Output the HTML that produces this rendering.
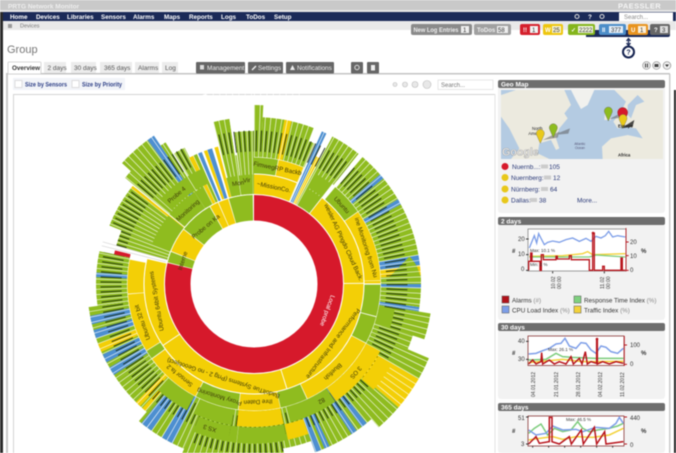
<!DOCTYPE html>
<html><head><meta charset="utf-8"><title>PRTG Network Monitor</title>
<style>
html,body{margin:0;padding:0;background:#fff;width:676px;height:453px;overflow:hidden}
svg{display:block;filter:blur(.4px);font-family:"Liberation Sans",sans-serif}
svg svg{filter:none}
.s circle{fill:none}
.g{stroke:#8fbc1f}.y{stroke:#f3cf06}.b{stroke:#4d8fd0}.r{stroke:#d6192b}.w{stroke:#fff}
.a130{r:110px;stroke-width:40px}.a142{r:116px;stroke-width:52px}.a143{r:116.5px;stroke-width:53px}
.a153{r:121.5px;stroke-width:63px}.a156{r:123px;stroke-width:66px}.a158{r:124px;stroke-width:68px}
.a167{r:128.5px;stroke-width:77px}.a179{r:134.5px;stroke-width:89px}.a190{r:140px;stroke-width:100px}
.a195{r:142.5px;stroke-width:105px}
.x1{r:76.25px;stroke-width:25.5px}.x2{r:99.75px;stroke-width:19.5px}.x3{r:118.5px;stroke-width:16px}
.x4{r:135px;stroke-width:16px}.x5{r:151.5px;stroke-width:16px}
.l text{font-size:6.2px;fill:#3d3a08;text-anchor:middle}
.t{font-size:6.5px;fill:#555}
.n{font-size:6.3px;fill:#fff;font-weight:bold}
.k{font-size:6.5px;fill:#2b3a78}
.h{font-size:6.5px;fill:#fff;font-weight:bold}
.v{font-size:6px;fill:#333}
</style></head><body>
<svg width="676" height="453" viewBox="0 0 676 453" xmlns="http://www.w3.org/2000/svg">
<rect width="676" height="453" fill="#fff"/>
<!-- chrome -->
<rect width="676" height="12" fill="#c9c9c9"/>
<rect y="10" width="676" height="2" fill="#e6e6e6"/>
<text x="8" y="8.5" font-size="6.5" font-weight="bold" fill="#eee">PRTG Network Monitor</text>
<text x="618" y="8.5" font-size="7.5" font-weight="bold" fill="#f5f5f5" letter-spacing=".4">PAESSLER</text>
<rect y="12" width="676" height="9" fill="#1b2a58"/>
<g class="n">
<text x="10" y="19">Home</text><text x="36" y="19">Devices</text><text x="67" y="19">Libraries</text><text x="101" y="19">Sensors</text><text x="133" y="19">Alarms</text><text x="164" y="19">Maps</text><text x="189" y="19">Reports</text><text x="221" y="19">Logs</text><text x="246" y="19">ToDos</text><text x="274" y="19">Setup</text>
</g>
<circle cx="577" cy="16.5" r="2" fill="none" stroke="#ddd" stroke-width="1"/>
<text x="588" y="19" class="n">?</text>
<circle cx="602" cy="16.5" r="2" fill="none" stroke="#ddd" stroke-width="1"/>
<rect x="619" y="12.5" width="54" height="8.5" fill="#fff"/>
<text x="624" y="19" font-size="6" fill="#888">Search...</text>
<rect y="21" width="676" height="9" fill="#e9e9e9"/>
<text x="20" y="27.5" font-size="5.5" fill="#777">Devices</text>
<rect x="8" y="24" width="4" height="4" fill="#999"/>
<!-- side stripes -->
<rect width="3" height="441" fill="#2a2a2a" y="12"/>
<rect x="6" y="74" width="2" height="379" fill="#c8c8c8"/>
<rect x="13" y="95" width="1" height="358" fill="#d4d4d4"/>
<rect x="674" y="90" width="2" height="363" fill="#222"/>
<rect x="669" y="74" width="1.5" height="379" fill="#ccc"/>
<text x="7" y="53" font-size="11" fill="#777">Group</text>
<!-- pills -->
<rect x="411" y="24" width="61" height="11" rx="2" fill="#8a8a8a"/><text x="413.500" y="32" font-size="6" font-weight="bold" fill="#eee" textLength="45" lengthAdjust="spacingAndGlyphs">New Log Entries</text><rect x="461" y="26" width="8" height="7" fill="#eee"/><text x="463" y="32" font-size="6" fill="#333">1</text>
<rect x="474" y="24" width="37" height="11" rx="2" fill="#a0a0a0"/><text x="477" y="32" font-size="6" font-weight="bold" fill="#eee">ToDos</text><rect x="497" y="26" width="11" height="7" fill="#eee"/><text x="498" y="32" font-size="6" fill="#333">58</text>
<path d="M586 30h84v5q0 2-2 2h-82z" fill="#1b2a58"/>
<rect x="520" y="24" width="20" height="11" rx="2" fill="#d5202c"/><text x="523" y="32" font-size="6" font-weight="bold" fill="#fff">!!</text><rect x="530" y="26" width="8" height="7" fill="#f2f2f2"/><text x="532" y="32" font-size="6" fill="#333">1</text>
<rect x="543" y="24" width="20" height="11" rx="2" fill="#eec60f"/><text x="545" y="32" font-size="6" font-weight="bold" fill="#fff">W</text><rect x="552" y="26" width="9" height="7" fill="#f7f2cc"/><text x="553" y="32" font-size="6" fill="#333">25</text>
<rect x="568" y="24" width="27" height="11" rx="2" fill="#84b51c"/><text x="571" y="32" font-size="6" font-weight="bold" fill="#fff">✓</text><rect x="578" y="26" width="15" height="7" fill="#f0f5dc"/><text x="579" y="32" font-size="6" fill="#333">2222</text>
<rect x="599" y="24" width="27" height="11" rx="2" fill="#4c8dc8"/><text x="602" y="32" font-size="6" font-weight="bold" fill="#fff">II</text><rect x="609" y="26" width="14" height="7" fill="#e4eef8"/><text x="611" y="32" font-size="6" fill="#333">377</text>
<rect x="628" y="24" width="20" height="11" rx="2" fill="#e8931e"/><text x="631" y="32" font-size="6" font-weight="bold" fill="#fff">U</text><rect x="638" y="26" width="8" height="7" fill="#fbeed8"/><text x="640" y="32" font-size="6" fill="#333">1</text>
<rect x="650" y="24" width="20" height="11" rx="2" fill="#666"/><text x="654" y="32" font-size="6" font-weight="bold" fill="#fff">?</text><rect x="660" y="26" width="8" height="7" fill="#ddd"/><text x="662" y="32" font-size="6" fill="#333">3</text>
<path d="M628.5 39v6M626.5 41l2-2.500 2 2.500M626.500 43l2 2.500 2-2.500" stroke="#1b2a58" stroke-width="1.300" fill="none"/>
<circle cx="628.500" cy="52" r="5.500" fill="#fff" stroke="#14224f" stroke-width="2"/>
<text x="628.500" y="54.500" font-size="7" font-weight="bold" fill="#14224f" text-anchor="middle">?</text>
<!-- tabs -->
<rect x="6" y="73" width="664" height="1.500" fill="#c4c4c4"/>
<path d="M8 74V63q0-1 1-1h31q1 0 1 1v11z" fill="#fff" stroke="#ccc" stroke-width=".8"/>
<text x="12" y="70" font-size="6.300" font-weight="bold" fill="#333">Overview</text>
<rect x="44" y="62" width="22" height="11" fill="#ececec"/><text x="47.500" y="70" class="t">2 days</text>
<rect x="71" y="62" width="25" height="11" fill="#ececec"/><text x="74" y="70" class="t">30 days</text>
<rect x="100" y="62" width="32" height="11" fill="#ececec"/><text x="104" y="70" class="t">365 days</text>
<rect x="135" y="62" width="24" height="11" fill="#ececec"/><text x="138" y="70" class="t">Alarms</text>
<rect x="162" y="62" width="16" height="11" fill="#ececec"/><text x="165" y="70" class="t">Log</text>
<rect x="196" y="62" width="49" height="11.500" rx="1" fill="#666"/><rect x="200" y="65" width="4" height="4.500" fill="#ddd"/><text x="207" y="70" font-size="6.400" fill="#eee">Management</text>
<rect x="248" y="62" width="35" height="11.500" rx="1" fill="#666"/><path d="M252 70l4-4" stroke="#eee" stroke-width="1.400"/><text x="258" y="70" font-size="6.400" fill="#eee">Settings</text>
<rect x="286" y="62" width="48" height="11.500" rx="1" fill="#666"/><path d="M290 70l2.500-5 2.500 5z" fill="#eee"/><text x="297" y="70" font-size="6.400" fill="#eee">Notifications</text>
<rect x="351" y="62" width="12" height="11.500" rx="1" fill="#666"/><circle cx="357" cy="67.500" r="2.200" fill="none" stroke="#ddd"/>
<rect x="367" y="62" width="12" height="11.500" rx="1" fill="#666"/><rect x="371" y="65" width="4" height="5.500" fill="#eee"/>
<g fill="#f0f0f0" stroke="#888" stroke-width=".7"><circle cx="646.500" cy="65.500" r="3.800"/><circle cx="656.500" cy="65.500" r="3.800"/><circle cx="667" cy="65.500" r="3.800"/></g>
<path d="M645.500 63.500v4M647.500 63.500v4" stroke="#333"/><rect x="654.500" y="64" width="4" height="3" fill="#444"/><path d="M665 64.500h4l-2 2.500z" fill="#333"/>
<!-- size bar -->
<rect x="13" y="78" width="112" height="12" fill="#f2f4f8"/>
<rect x="15" y="80.500" width="7" height="7" fill="#fff" stroke="#ddd"/><text x="25" y="86.500" font-size="6" font-weight="bold" fill="#2d3f86" textLength="42" lengthAdjust="spacingAndGlyphs">Size by Sensors</text>
<rect x="72" y="80.500" width="7" height="7" fill="#fff" stroke="#ddd"/><text x="82" y="86.500" font-size="6" font-weight="bold" fill="#2d3f86" textLength="40" lengthAdjust="spacingAndGlyphs">Size by Priority</text>
<g fill="#e8e8e8" stroke="#bbb" stroke-width=".6"><circle cx="395" cy="84.500" r="2"/><circle cx="405" cy="84.500" r="2.500"/><circle cx="415" cy="84.500" r="3"/><circle cx="427" cy="84.500" r="4"/></g>
<rect x="438" y="80" width="55" height="9.500" fill="#fff" stroke="#ddd" stroke-width=".7"/><text x="441" y="87" font-size="6" fill="#777">Search...</text>
<rect x="13" y="94" width="482" height="1" fill="#d4d4d4"/>
<rect x="494.500" y="94" width="1" height="359" fill="#e4e4e4"/>

<!-- sunburst -->
<g transform="translate(254 284) rotate(-90)" class="s">
<circle pathLength="360" class="g a179" stroke-dasharray="0 0 3 999"/>
<circle pathLength="360" class="g a167" stroke-dasharray="0 3 18 999"/>
<circle pathLength="360" class="g a153" stroke-dasharray="0 21 2.300 999"/>
<circle pathLength="360" class="y a167" stroke-dasharray="0 10.500 2.500 999"/>
<circle pathLength="360" class="b a167" stroke-dasharray="0 24 1.700 999"/>
<circle pathLength="360" class="y a142" stroke-dasharray="0 26 1.600 999"/>
<circle pathLength="360" class="g a167" stroke-dasharray="0 28 10.800 999"/>
<circle pathLength="360" class="g a167" stroke-dasharray="0 40.500 8.500 999"/>
<circle pathLength="360" class="b a167" stroke-dasharray="0 49 1.800 999"/>
<circle pathLength="360" class="g a167" stroke-dasharray="0 50.800 8.700 999"/>
<circle pathLength="360" class="b a167" stroke-dasharray="0 59.500 2 999"/>
<circle pathLength="360" class="g a167" stroke-dasharray="0 61.500 18.500 999"/>
<circle pathLength="360" class="b a167" stroke-dasharray="0 80 3.500 999"/>
<circle pathLength="360" class="y a167" stroke-dasharray="0 83.500 3.500 999"/>
<circle pathLength="360" class="g a167" stroke-dasharray="0 87 3 999"/>
<circle pathLength="360" class="b a167" stroke-dasharray="0 90 1.500 999"/>
<circle pathLength="360" class="g a167" stroke-dasharray="0 91.500 6.500 999"/>
<circle pathLength="360" class="b a167" stroke-dasharray="0 98 1.500 999"/>
<circle pathLength="360" class="g a179" stroke-dasharray="0 99.500 8.500 999"/>
<circle pathLength="360" class="g a167" stroke-dasharray="0 108 5 999"/>
<circle pathLength="360" class="g a190" stroke-dasharray="0 113 7 999"/>
<circle pathLength="360" class="y a190" stroke-dasharray="0 120 10.500 999"/>
<circle pathLength="360" class="g a190" stroke-dasharray="0 130.500 8.500 999"/>
<circle pathLength="360" class="g a179" stroke-dasharray="0 139 21 999"/>
<circle pathLength="360" class="b a179" stroke-dasharray="0 141 2 999"/>
<circle pathLength="360" class="b a179" stroke-dasharray="0 145 2 999"/>
<circle pathLength="360" class="b a179" stroke-dasharray="0 155 1.800 999"/>
<circle pathLength="360" class="b a179" stroke-dasharray="0 158 2 999"/>
<circle pathLength="360" class="g a167" stroke-dasharray="0 160 10 999"/>
<circle pathLength="360" class="g a195" stroke-dasharray="0 170 33 999"/>
<circle pathLength="360" class="g a179" stroke-dasharray="0 203 17 999"/>
<circle pathLength="360" class="b a179" stroke-dasharray="0 207 4 999"/>
<circle pathLength="360" class="b a179" stroke-dasharray="0 215 4 999"/>
<circle pathLength="360" class="g a167" stroke-dasharray="0 220 15 999"/>
<circle pathLength="360" class="y a167" stroke-dasharray="0 220.500 1.500 999"/>
<circle pathLength="360" class="y a167" stroke-dasharray="0 223 2 999"/>
<circle pathLength="360" class="g a167" stroke-dasharray="0 235 27 999"/>
<circle pathLength="360" class="b a167" stroke-dasharray="0 237 3 999"/>
<circle pathLength="360" class="b a167" stroke-dasharray="0 242 3 999"/>
<circle pathLength="360" class="y a167" stroke-dasharray="0 246 3 999"/>
<circle pathLength="360" class="b a167" stroke-dasharray="0 251 3 999"/>
<circle pathLength="360" class="b a167" stroke-dasharray="0 256 3 999"/>
<circle pathLength="360" class="g a158" stroke-dasharray="0 262 20 999"/>
<circle pathLength="360" class="b a158" stroke-dasharray="0 272.500 1.700 999"/>
<circle pathLength="360" class="g a143" stroke-dasharray="0 285.500 6.500 999"/>
<circle pathLength="360" class="g a156" stroke-dasharray="0 292 16 999"/>
<circle pathLength="360" class="g a167" stroke-dasharray="0 309.500 3 999"/>
<circle pathLength="360" class="g a179" stroke-dasharray="0 312.500 11 999"/>
<circle pathLength="360" class="b a179" stroke-dasharray="0 323.500 2.500 999"/>
<circle pathLength="360" class="g a167" stroke-dasharray="0 326 2 999"/>
<circle pathLength="360" class="g a153" stroke-dasharray="0 328.500 6 999"/>
<circle pathLength="360" class="g a167" stroke-dasharray="0 345.800 5.700 999"/>
<circle pathLength="360" class="g a130" stroke-dasharray="0 351.500 1 999"/>
<circle pathLength="360" class="g a153" stroke-dasharray="0 352.700 7.300 999"/>
<!-- white separators between strips -->
<circle pathLength="360" r="142.500" stroke="#fff" stroke-opacity=".85" stroke-width="106" stroke-dasharray=".28 1.620"/>
<!-- strip label texture -->
<circle pathLength="360" r="143" stroke="#14240c" stroke-opacity=".85" stroke-width="21" stroke-dasharray=".42 1.480" stroke-dashoffset="-.75"/>
<circle pathLength="360" r="165" stroke="#14240c" stroke-opacity=".85" stroke-width="10" stroke-dasharray="0 170 .42 1.480 .42 1.480 .42 1.480 .42 1.480 .42 1.480 .42 1.480 .42 1.480 .42 1.480 .42 1.480 .42 1.480 .42 1.480 .42 1.480 .42 1.480 .42 1.480 .42 1.480 .42 1.480 .42 999"/>
<!-- gap covers -->
<circle pathLength="360" r="146" class="w" stroke-width="100" stroke-dasharray="0 38.800 1.700 999"/>
<circle pathLength="360" r="144" class="w" stroke-width="104" stroke-dasharray="0 333 12.800 999"/>
<circle pathLength="360" r="169" class="w" stroke-width="52" stroke-dasharray="0 282 10 999"/>
<circle pathLength="360" r="140" class="w" stroke-width="100" stroke-dasharray="0 283.600 1.900 999"/>
<circle pathLength="360" r="146" class="w" stroke-width="100" stroke-dasharray="0 335 10.800 999"/>
<!-- thin strips at the top-left -->
<circle pathLength="360" class="y a142" stroke-dasharray="0 333 1.800 999"/>
<circle pathLength="360" class="g a142" stroke-dasharray="0 335 1.500 999"/>
<circle pathLength="360" class="b a142" stroke-dasharray="0 337 1.600 999"/>
<circle pathLength="360" class="y a142" stroke-dasharray="0 339.500 1.400 999"/>
<circle pathLength="360" class="b a142" stroke-dasharray="0 341 2 999"/>
<circle pathLength="360" class="y a142" stroke-dasharray="0 344 1.500 999"/>
<circle pathLength="360" class="r a143" stroke-dasharray="0 282 1.600 999"/>
<circle pathLength="360" class="y a156" stroke-dasharray="0 308 1 999"/>
<circle pathLength="360" r="124" fill="none" stroke="#ccc" stroke-width="66" stroke-dasharray="0 284 .25 1.200 .25 999"/>
<!-- white underlay for rings -->
<circle pathLength="360" r="108" class="w" stroke-width="38" stroke-dasharray="0 0 23.300 999"/>
<circle pathLength="360" r="108" class="w" stroke-width="38" stroke-dasharray="0 38 246 999"/>
<!-- ring 5 -->
<circle pathLength="360" class="y x5" stroke-dasharray="0 120 11.500 999"/>
<circle pathLength="360" class="y x5" stroke-dasharray="0 160 7.700 999"/>
<circle pathLength="360" class="g x5" stroke-dasharray="0 168 18 999"/>
<circle pathLength="360" class="g x5" stroke-dasharray="0 186.300 3 999"/>
<circle pathLength="360" class="g x5" stroke-dasharray="0 189.500 13 999"/>
<!-- ring 4 -->
<circle pathLength="360" class="g x4" stroke-dasharray="0 100 8 999"/>
<circle pathLength="360" class="y x4" stroke-dasharray="0 118 27 999"/>
<circle pathLength="360" class="g x4" stroke-dasharray="0 145.300 20 999"/>
<circle pathLength="360" class="y x4" stroke-dasharray="0 168 19 999"/>
<circle pathLength="360" class="g x4" stroke-dasharray="0 189 16 999"/>
<circle pathLength="360" class="g x4" stroke-dasharray="0 208 14 999"/>
<!-- ring 3 -->
<circle pathLength="360" class="g x3" stroke-dasharray="0 0 11 999"/>
<circle pathLength="360" class="y x3" stroke-dasharray="0 11.300 11.700 999"/>
<circle pathLength="360" class="g x3" stroke-dasharray="0 29 9 999"/>
<circle pathLength="360" class="g x3" stroke-dasharray="0 40 15 999"/>
<circle pathLength="360" class="y x3" stroke-dasharray="0 55.300 33 999"/>
<circle pathLength="360" class="y x3" stroke-dasharray="0 88.500 1.200 999"/>
<circle pathLength="360" class="g x3" stroke-dasharray="0 90.300 14.500 999"/>
<circle pathLength="360" class="g x3" stroke-dasharray="0 105.200 12.500 999"/>
<circle pathLength="360" class="y x3" stroke-dasharray="0 118 37 999"/>
<circle pathLength="360" class="g x3" stroke-dasharray="0 155.300 12.500 999"/>
<circle pathLength="360" class="y x3" stroke-dasharray="0 168 19 999"/>
<circle pathLength="360" class="g x3" stroke-dasharray="0 187.300 20 999"/>
<circle pathLength="360" class="y x3" stroke-dasharray="0 207.600 26 999"/>
<circle pathLength="360" class="g x3" stroke-dasharray="0 234 4 999"/>
<circle pathLength="360" class="y x3" stroke-dasharray="0 238.300 27 999"/>
<circle pathLength="360" class="y x3" stroke-dasharray="0 265.600 15.500 999"/>
<circle pathLength="360" class="g x3" stroke-dasharray="0 312 16 999"/>
<circle pathLength="360" class="g x3" stroke-dasharray="0 328.300 7.500 999"/>
<!-- ring 2 -->
<circle pathLength="360" class="y x2" stroke-dasharray="0 0 23 999"/>
<circle pathLength="360" class="g x2" stroke-dasharray="0 29 9 999"/>
<circle pathLength="360" class="y x2" stroke-dasharray="0 38.500 51 999"/>
<circle pathLength="360" class="y x2" stroke-dasharray="0 90 72.500 999"/>
<circle pathLength="360" class="y x2" stroke-dasharray="0 163 73 999"/>
<circle pathLength="360" class="y x2" stroke-dasharray="0 236.500 47 999"/>
<circle pathLength="360" class="g x2" stroke-dasharray="0 292 17 999"/>
<circle pathLength="360" class="g x2" stroke-dasharray="0 310 17.500 999"/>
<circle pathLength="360" class="g x2" stroke-dasharray="0 328 4 999"/>
<circle pathLength="360" class="g x2" stroke-dasharray="0 345.800 6 999"/>
<circle pathLength="360" class="g x2" stroke-dasharray="0 352.200 7.500 999"/>
<!-- ring 1 -->
<circle pathLength="360" class="r x1" stroke-dasharray="0 0 284 999"/>
<circle pathLength="360" class="g x1" stroke-dasharray="0 284.500 7 999"/>
<circle pathLength="360" class="y x1" stroke-dasharray="0 292 16 999"/>
<circle pathLength="360" class="g x1" stroke-dasharray="0 308.500 22 999"/>
<circle pathLength="360" class="y x1" stroke-dasharray="0 331 5.500 999"/>
<circle pathLength="360" class="y x1" stroke-dasharray="0 337 6.500 999"/>
<circle pathLength="360" class="g x1" stroke-dasharray="0 344 15.600 999"/>
</g>
<!-- ring labels -->
<g transform="translate(254 284)" class="l">
<text transform="rotate(11.500) translate(0 -97)" font-size="7">~MissionCo.</text>
<text transform="rotate(11.500) translate(0 -116)">FimwegRP Backb</text>
<text transform="rotate(65) translate(0 -97)">wesler AG Pingdo Cloud Back.</text>
<text transform="rotate(72) translate(0 -116)">ine Monitoring from Nu</text>
<text transform="rotate(127) translate(0 -97)">Performance and Infrastructure</text>
<text transform="rotate(138) translate(0 -116)">Bluefish</text>
<text transform="rotate(131) translate(0 -133)">3 OS</text>
<text transform="rotate(150) translate(0 -133)">82</text>
<text transform="rotate(198) translate(0 -97)">BadoltTue Systems (Prtg 2 - no Geoobject)</text>
<text transform="rotate(178) translate(0 -116)">Ihre Daten</text>
<text transform="rotate(197) translate(0 -116)">Proxy Monitoring</text>
<text transform="rotate(197) translate(0 -149)">XS 3</text>
<text transform="rotate(219) translate(0 -116)">Sensor fa.2</text>
<text transform="rotate(260) translate(0 -97)">Ubuntu 64bit Systems</text>
<text transform="rotate(251) translate(0 -116)">Ubuntu 32 bit</text>
<text transform="rotate(320) translate(0 -73)">Probe on Ka</text>
<text transform="rotate(318) translate(0 -97)">Monitoring</text>
<text transform="rotate(319) translate(0 -116)">Probe 4</text>
<text transform="rotate(288) translate(0 -73)" font-size="5">Interne</text>
<text transform="rotate(351) translate(0 -100)" font-size="5">Mon</text>
<text transform="rotate(356) translate(0 -102)" font-size="5">Vir</text>
<text transform="rotate(48) translate(0 -116)" font-size="5.500">Ubuntu</text>
<text transform="rotate(110) translate(0 -76)" style="fill:#fff">Local probe</text>
</g>
<!-- right panels -->
<rect x="498" y="80" width="167" height="133" rx="3" fill="#f2f2f2"/>
<rect x="498" y="80" width="167" height="8" rx="2" fill="#6e6e6e"/><text x="501" y="86.500" class="h">Geo Map</text>
<svg x="501" y="90" width="162" height="69" viewBox="15 15 486 207">
<rect x="15" y="15" width="486" height="207" fill="#b4cbe2"/>
<path d="M15 30L60 15H205L225 60L205 85L215 100L190 130L180 160L190 190L180 195L165 165L130 175L125 205L160 222H45L70 190L40 130L15 95z" fill="#eceadf"/>
<path d="M225 15H295L275 60L255 72L240 45z" fill="#f1f1ee"/>
<path d="M355 15H501V222H320L318 185L345 160L395 150L440 160L420 130L385 125L365 130L352 110L375 80L390 50z" fill="#eceadf"/>
<path d="M328 70L342 75L345 105L325 105z" fill="#eceadf"/>
<path d="M395 60L425 30L445 50L420 60L405 100L395 90z" fill="#b4cbe2"/>
<path d="M375 130l40-25-5 20z" fill="#111" opacity=".75"/><path d="M140 165l50-25-5 18z M172 150l50-20-5 16z M340 102l35-18-5 15z" fill="#555" opacity=".5"/>
<text x="108" y="135" font-size="13" fill="#222">North</text><text x="97" y="150" font-size="13" fill="#222">America</text>
<path d="M337 108l-11-25a12 12 0 1 1 22 0z" fill="#8ebc1e" stroke="#555"/>
<path d="M380 120l-14-32a15 15 0 1 1 28 0z" fill="#d6192b" stroke="#711"/>
<path d="M381 130l-11-25a12 12 0 1 1 22 0z" fill="#e9c91a" stroke="#665"/>
<path d="M172 158l-11-25a12 12 0 1 1 22 0z" fill="#8ebc1e" stroke="#555"/>
<path d="M133 175l-11-25a12 12 0 1 1 22 0z" fill="#e9c91a" stroke="#665"/>
<text x="366" y="128" font-size="13" font-weight="bold" fill="#222">Europe</text>
<text x="366" y="214" font-size="13" font-weight="bold" fill="#222">Africa</text>
<text x="235" y="180" font-size="10" fill="#557">Atlantic</text><text x="237" y="192" font-size="10" fill="#557">Ocean</text>
<text x="18" y="212" font-size="32" font-weight="bold" fill="#eee" stroke="#888" stroke-width="1">Google</text>
</svg>
<g font-size="6.500">
<circle cx="505" cy="166.500" r="3.500" fill="#d6192b"/><text x="512" y="169" class="k">Nuernb...:</text><rect x="541" y="164.500" width="7" height="4" fill="#ccc"/><text x="549" y="169" class="k">105</text>
<circle cx="505" cy="177.500" r="3.500" fill="#e8c81a"/><text x="511" y="180" class="k">Nuernberg:</text><rect x="544" y="175.500" width="7" height="4" fill="#ccc"/><text x="553" y="180" class="k">12</text>
<circle cx="505" cy="189" r="3.500" fill="#e8c81a"/><text x="511" y="191.500" class="k">Nürnberg:</text><rect x="541" y="187" width="7" height="4" fill="#ccc"/><text x="550" y="191.500" class="k">64</text>
<circle cx="505" cy="200" r="3.500" fill="#e8c81a"/><text x="511" y="202.500" class="k">Dallas:</text><rect x="530" y="198" width="7" height="4" fill="#ccc"/><text x="539" y="202.500" class="k">38</text>
<text x="577" y="202.500" class="k">More...</text>
</g>
<!-- 2 days -->
<rect x="498" y="217" width="167" height="103" rx="3" fill="#f2f2f2"/>
<rect x="498" y="217" width="167" height="8" rx="2" fill="#6e6e6e"/><text x="501" y="223.500" class="h">2 days</text>
<rect x="528" y="229" width="98" height="42" fill="#fff" stroke="#777" stroke-width=".7"/>
<g transform="translate(496 213) scale(.3333)" fill="none" stroke-width="4">
<path d="M100 105L108 85L115 68L122 90L128 62L136 78L145 95L155 88L170 84L190 88L210 80L230 75L250 85L270 76L285 85L300 70L315 75L328 68L338 55L350 72L365 68L388 72" stroke="#7d9ee8"/>
<path d="M100 130L200 128L260 122L275 116L290 125L388 122" stroke="#f3d23a"/>
<path d="M100 132L280 132L300 126L388 132" stroke="#7ccc7c"/>
<path d="M98 172V145H104V120H108V145H132V172H136V125H142V140H180V130H184V138H220V128H226V140H280V172H290V60H295V172H320V160H325V172H375V135H379V172H388" stroke="#b8141c"/>
<path d="M390 45V175" stroke="#b8141c" stroke-width="2.500"/>
<path d="M90 78h8M90 125h8M90 172h8" stroke="#333" stroke-width="3"/>
<path d="M390 87h8M390 128h8M390 172h8" stroke="#b8141c" stroke-width="3"/>
<path d="M170 175v6M325 175v6" stroke="#333" stroke-width="3"/>
</g>
<circle cx="593" cy="233" r="1.300" fill="#b8141c"/>
<g class="v">
<text x="518" y="241">20</text><text x="518" y="256">10</text><text x="521" y="271">0</text>
<text x="630" y="244">20</text><text x="630" y="258">10</text><text x="630" y="272">0</text>
<text x="512" y="253" font-weight="bold">#</text><text x="641" y="253" font-weight="bold">%</text>
<text x="530" y="252" font-size="4.500">Max: 10.1 %</text><text x="530" y="266" font-size="4.500">Min: 2 %</text>
<text transform="translate(555 289) rotate(-90)" font-size="5">10.02</text><text transform="translate(561 289) rotate(-90)" font-size="5">00:00</text>
<text transform="translate(604 289) rotate(-90)" font-size="5">11.02</text><text transform="translate(610 289) rotate(-90)" font-size="5">00:00</text>
</g>
<rect x="502" y="296" width="7" height="7" fill="#b0101a" stroke="#555" stroke-width=".5"/><text x="512" y="302.500" font-size="6.300" fill="#333">Alarms <tspan fill="#888">(#)</tspan></text>
<rect x="574" y="296" width="7" height="7" fill="#7fd17f" stroke="#555" stroke-width=".5"/><text x="584" y="302.500" font-size="6.300" fill="#333">Response Time Index <tspan fill="#888">(%)</tspan></text>
<rect x="502" y="306" width="7" height="7" fill="#7d9ee8" stroke="#555" stroke-width=".5"/><text x="512" y="312.500" font-size="6.300" fill="#333">CPU Load Index <tspan fill="#888">(%)</tspan></text>
<rect x="574" y="306" width="7" height="7" fill="#f3d23a" stroke="#555" stroke-width=".5"/><text x="584" y="312.500" font-size="6.300" fill="#333">Traffic Index <tspan fill="#888">(%)</tspan></text>
<!-- 30 days -->
<rect x="498" y="323" width="167" height="76" rx="3" fill="#f2f2f2"/>
<rect x="498" y="323" width="167" height="8" rx="2" fill="#6e6e6e"/><text x="501" y="329.500" class="h">30 days</text>
<rect x="528" y="336" width="96" height="29.500" fill="#fff" stroke="#7a1a1a" stroke-width=".7"/>
<g transform="translate(496 320) scale(.3333)" fill="none" stroke-width="4.500">
<path d="M98 102L120 100L140 92L160 85L180 72L195 70L207 55L220 78L240 85L255 68L270 70L285 90L300 100L315 78L330 82L345 95L365 100L382 85" stroke="#7d9ee8"/>
<path d="M98 120L150 118L180 100L200 110L230 112L300 115L382 115" stroke="#7ccc7c"/>
<path d="M98 128L160 122L200 118L260 125L382 124" stroke="#f3d23a"/>
<path d="M98 132L110 120L120 132L135 125L137 98L140 132L160 120L175 132L190 125L210 132L225 110L232 132L250 115L258 132L268 95L274 132L285 125L302 130V58H304V132L320 125L340 132L360 125L382 130" stroke="#b8141c"/>
<path d="M385 48V138" stroke="#b8141c" stroke-width="2.500"/>
<path d="M90 64h8M90 118h8" stroke="#333" stroke-width="3"/><path d="M385 75h8M385 133h8" stroke="#b8141c" stroke-width="3"/>
</g>
<circle cx="597" cy="339" r="1.300" fill="#b8141c"/>
<g class="v">
<text x="518" y="343">40</text><text x="518" y="361">30</text>
<text x="630" y="347">100</text><text x="630" y="366">0</text>
<text x="512" y="355" font-weight="bold">#</text><text x="641" y="355" font-weight="bold">%</text>
<text x="548" y="351" font-size="4.500">Max: 26.1 %</text>
<text transform="translate(535 397) rotate(-90)" font-size="5">04.01.2012</text>
<text transform="translate(558 397) rotate(-90)" font-size="5">21.01.2012</text>
<text transform="translate(580 397) rotate(-90)" font-size="5">28.01.2012</text>
<text transform="translate(602 397) rotate(-90)" font-size="5">04.02.2012</text>
<text transform="translate(624 397) rotate(-90)" font-size="5">11.02.2012</text>
</g>
<!-- 365 days -->
<rect x="498" y="403" width="167" height="50" rx="3" fill="#f2f2f2"/>
<rect x="498" y="403" width="167" height="8" rx="2" fill="#6e6e6e"/><text x="501" y="409.500" class="h">365 days</text>
<rect x="528" y="416" width="96" height="30" fill="#fff" stroke="#7a1a1a" stroke-width=".7"/>
<g transform="translate(496 320) scale(.3333)" fill="none" stroke-width="4.500">
<path d="M98 340L115 325L135 312L155 345L175 325L200 335L225 330L245 305L260 325L280 335L305 330L340 325L365 318L382 310" stroke="#7ccc7c"/>
<path d="M98 330L120 345L150 340L170 318L200 330L240 328L260 335L300 322L340 325L360 310L370 292L382 310" stroke="#7d9ee8"/>
<path d="M98 360L130 355L170 350L200 358L240 350L290 352L340 345L382 325" stroke="#f3d23a"/>
<path d="M98 372L120 350L130 370L160 365V292H168V365L190 372L220 350L226 372L256 330L262 372L295 322L302 372L326 335L330 372L382 365" stroke="#b8141c"/>
<path d="M90 291h8M90 372h8" stroke="#333" stroke-width="3"/><path d="M385 291h8M385 372h8" stroke="#b8141c" stroke-width="3"/>
<path d="M110 378v5M158 378v5M206 378v5M254 378v5M302 378v5M350 378v5" stroke="#333" stroke-width="3"/>
</g>
<g class="v">
<text x="518" y="420">51</text><text x="521" y="446">3</text>
<text x="630" y="420">440</text><text x="630" y="447">0</text>
<text x="512" y="433" font-weight="bold">#</text><text x="641" y="433" font-weight="bold">%</text>
<text x="566" y="421" font-size="4.500">Max: 46.5 %</text>
</g>
</svg>
</body></html>
